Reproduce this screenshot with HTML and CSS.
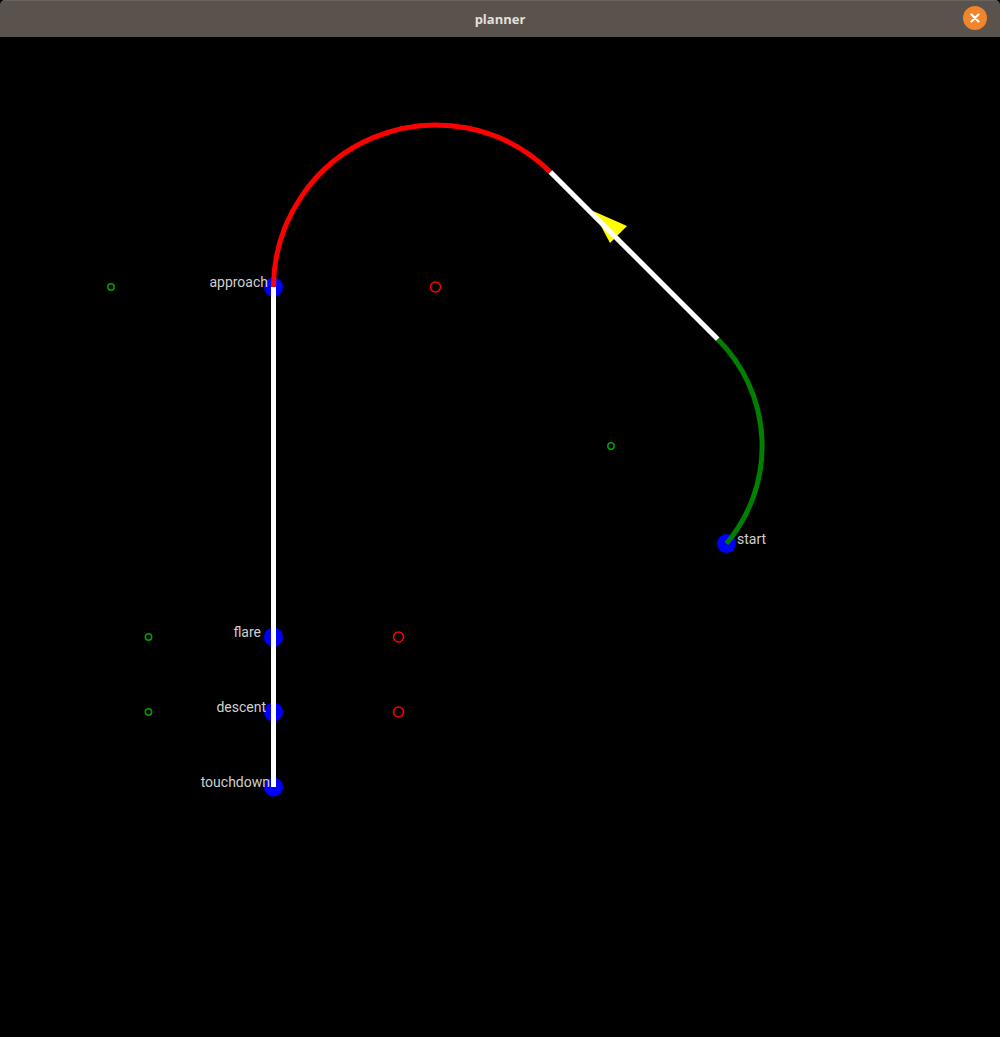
FILE: index.html
```html
<!DOCTYPE html>
<html>
<head>
<meta charset="utf-8">
<title>planner</title>
<link rel="stylesheet" href="styles.css">
</head>
<body>
<div class="window">
  <header class="titlebar">
    <span class="title">planner</span>
    <button class="close" aria-label="close">
      <svg width="10" height="10" viewBox="0 0 10 10"><path d="M1.5 1.5 L8.5 8.5 M8.5 1.5 L1.5 8.5" stroke="#fff" stroke-width="2.2" stroke-linecap="round"/></svg>
    </button>
  </header>
  <main class="canvas">
    <svg class="plot" width="1000" height="1000" viewBox="0 37 1000 1000">
      <g class="turn-centers-green" fill="none" stroke="#00a000" stroke-width="1.5">
        <circle cx="111" cy="287" r="3.2"/>
        <circle cx="611" cy="446" r="3.2"/>
        <circle cx="148.5" cy="637" r="3.2"/>
        <circle cx="148.5" cy="712" r="3.2"/>
      </g>
      <g class="turn-centers-red" fill="none" stroke="#ff0000" stroke-width="1.6">
        <circle cx="435.5" cy="287" r="5"/>
        <circle cx="398.5" cy="637" r="5"/>
        <circle cx="398.5" cy="712" r="5"/>
      </g>
      <polygon points="593,211 627,226 610,243" fill="#ffff00"/>
      <g fill="#0000ff">
        <circle cx="273.5" cy="287" r="9.5"/>
        <circle cx="726.5" cy="543.5" r="9.5"/>
        <circle cx="273.5" cy="637" r="9.5"/>
        <circle cx="273.5" cy="712" r="9.5"/>
        <circle cx="273.5" cy="787" r="9.5"/>
      </g>
      <g fill="none" stroke-width="5">
        <path d="M273.5 287 A162.5 162.5 0 0 1 550.4 172.1" stroke="#ff0000"/>
        <path d="M550.4 172.1 L717.8 339.2" stroke="#ffffff"/>
        <path d="M717.8 339.2 A151 151 0 0 1 726.5 543.5" stroke="#008000"/>
        <path d="M273.5 287 L273.5 787" stroke="#ffffff"/>
      </g>
      <g class="labels">
        <text x="268" y="287" text-anchor="end">approach</text>
        <text x="737" y="544">start</text>
        <text x="261" y="637" text-anchor="end">flare</text>
        <text x="266" y="712" text-anchor="end">descent</text>
        <text x="270" y="787" text-anchor="end">touchdown</text>
      </g>
    </svg>
  </main>
</div>
</body>
</html>
```

FILE: styles.css
```css
html, body {
  margin: 0;
  padding: 0;
  background: #000;
}
.window {
  width: 1000px;
  height: 1037px;
  display: flex;
  flex-direction: column;
  background: #000;
  overflow: hidden;
}
.titlebar {
  height: 37px;
  flex: 0 0 37px;
  background: #5a524c;
  border-top: 1px solid #6a635d;
  box-sizing: border-box;
  border-radius: 5px 5px 0 0;
  display: flex;
  align-items: center;
  justify-content: center;
  position: relative;
}
.title {
  font-family: "Open Sans", "Liberation Sans", sans-serif;
  font-weight: 700;
  font-size: 13px;
  color: #e4e0da;
  letter-spacing: 0;
}
.close {
  position: absolute;
  right: 13px;
  top: 5px;
  width: 24px;
  height: 24px;
  border-radius: 50%;
  border: none;
  padding: 0;
  background: #f2842b;
  display: flex;
  align-items: center;
  justify-content: center;
}
.canvas {
  flex: 1;
  background: #000;
}
.plot {
  display: block;
}
.labels text {
  font-family: Roboto, "Liberation Sans", sans-serif;
  font-size: 14px;
  fill: #cfcfcf;
}
```
